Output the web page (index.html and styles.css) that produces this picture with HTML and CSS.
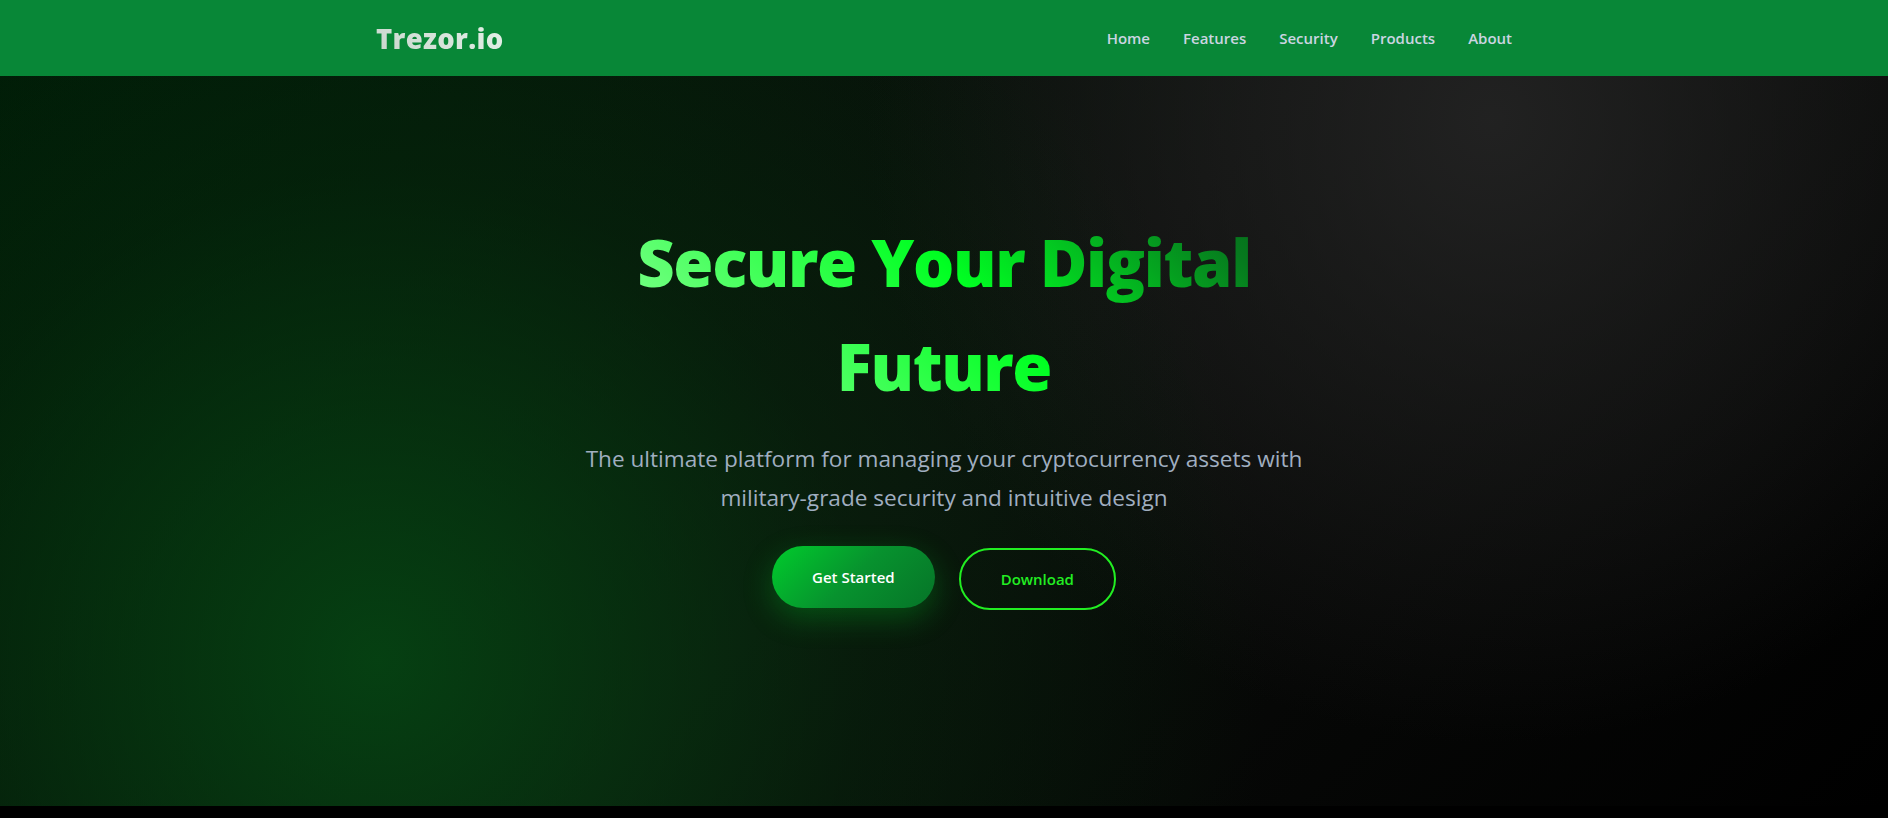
FILE: index.html
```html
<!doctype html>
<html lang="en">
<head>
    <meta charset="UTF-8">
    <meta name="viewport" content="width=device-width, initial-scale=1.0">
    <title>Trezor.io</title>
    <link rel="stylesheet" href="styles.css">
</head>
<body>
    <header class="topbar">
        <div class="container topbar-inner">
            <a class="logo" href="#">Trezor.io</a>
            <nav class="nav">
                <a href="#">Home</a>
                <a href="#">Features</a>
                <a href="#">Security</a>
                <a href="#">Products</a>
                <a href="#">About</a>
            </nav>
        </div>
    </header>

    <section class="hero">
        <div class="hero-content">
            <h1 class="hero-title">Secure Your Digital Future</h1>
            <p class="hero-sub">The ultimate platform for managing your cryptocurrency assets with military-grade security and intuitive design</p>
            <div class="hero-actions">
                <a class="btn btn-primary" href="#">Get Started</a>
                <a class="btn btn-outline" href="#">Download</a>
            </div>
        </div>
    </section>
</body>
</html>
```

FILE: styles.css
```css
* {
    margin: 0;
    padding: 0;
    box-sizing: border-box;
}
body {
    background: #000;
    font-family: "Open Sans", "Noto Sans", sans-serif;
    color: #fff;
}
a {
    text-decoration: none;
}
.container {
    max-width: 1200px;
    margin: 0 auto;
    padding: 0 32px;
}

/* header */
.topbar {
    background: #088737;
    height: 76px;
}
.topbar-inner {
    height: 100%;
    display: flex;
    align-items: center;
    justify-content: space-between;
}
.logo {
    font-size: 27.5px;
    font-weight: 800;
    background: linear-gradient(45deg, #c9d6cd, #e4f1e8);
    -webkit-background-clip: text;
    background-clip: text;
    color: transparent;
    letter-spacing: 0.3px;
}
.nav {
    display: flex;
    gap: 33px;
}
.nav a {
    color: #cbd5e1;
    font-size: 15px;
    font-weight: 600;
}

/* hero */
.hero {
    height: 730px;
    padding-top: 134px;
    background:
        radial-gradient(circle at 20% 80%, rgba(5, 76, 20, 0.8) 0%, rgba(4, 56, 14, 0.35) 30%, transparent 55%),
        radial-gradient(circle at 79% 6%, rgba(36, 36, 36, 0.9) 0%, transparent 38%),
        linear-gradient(135deg, #001806 0%, #0b0d0b 50%, #000 100%);
}
.hero-content {
    text-align: center;
}
.hero-title {
    max-width: 800px;
    margin: 0 auto;
    font-size: 65px;
    line-height: 104px;
    font-weight: 800;
    letter-spacing: -1.4px;
    background: linear-gradient(45deg, #a4ffae 0%, #66ff77 25%, #00ff22 55%, #067a1e 85%, #045a15 100%);
    -webkit-background-clip: text;
    background-clip: text;
    color: transparent;
}
.hero-sub {
    max-width: 780px;
    margin: 22px auto 0;
    font-size: 22.6px;
    line-height: 38.5px;
    color: #a0aec0;
}
.hero-actions {
    display: flex;
    justify-content: center;
    gap: 24px;
    margin-top: 31px;
}
.btn {
    display: inline-block;
    font-size: 15px;
    font-weight: 600;
    line-height: 22px;
    border-radius: 40px;
}
.btn-primary {
    padding: 20px 40px;
    color: #fff;
    background: linear-gradient(135deg, #00cc2c 0%, #07922e 50%, #067428 100%);
    box-shadow: 0 10px 30px rgba(0, 200, 40, 0.3);
    transform: translateY(-2px);
}
.btn-outline {
    padding: 18px 40px;
    color: #22ee22;
    border: 2px solid #22ee22;
}
```
